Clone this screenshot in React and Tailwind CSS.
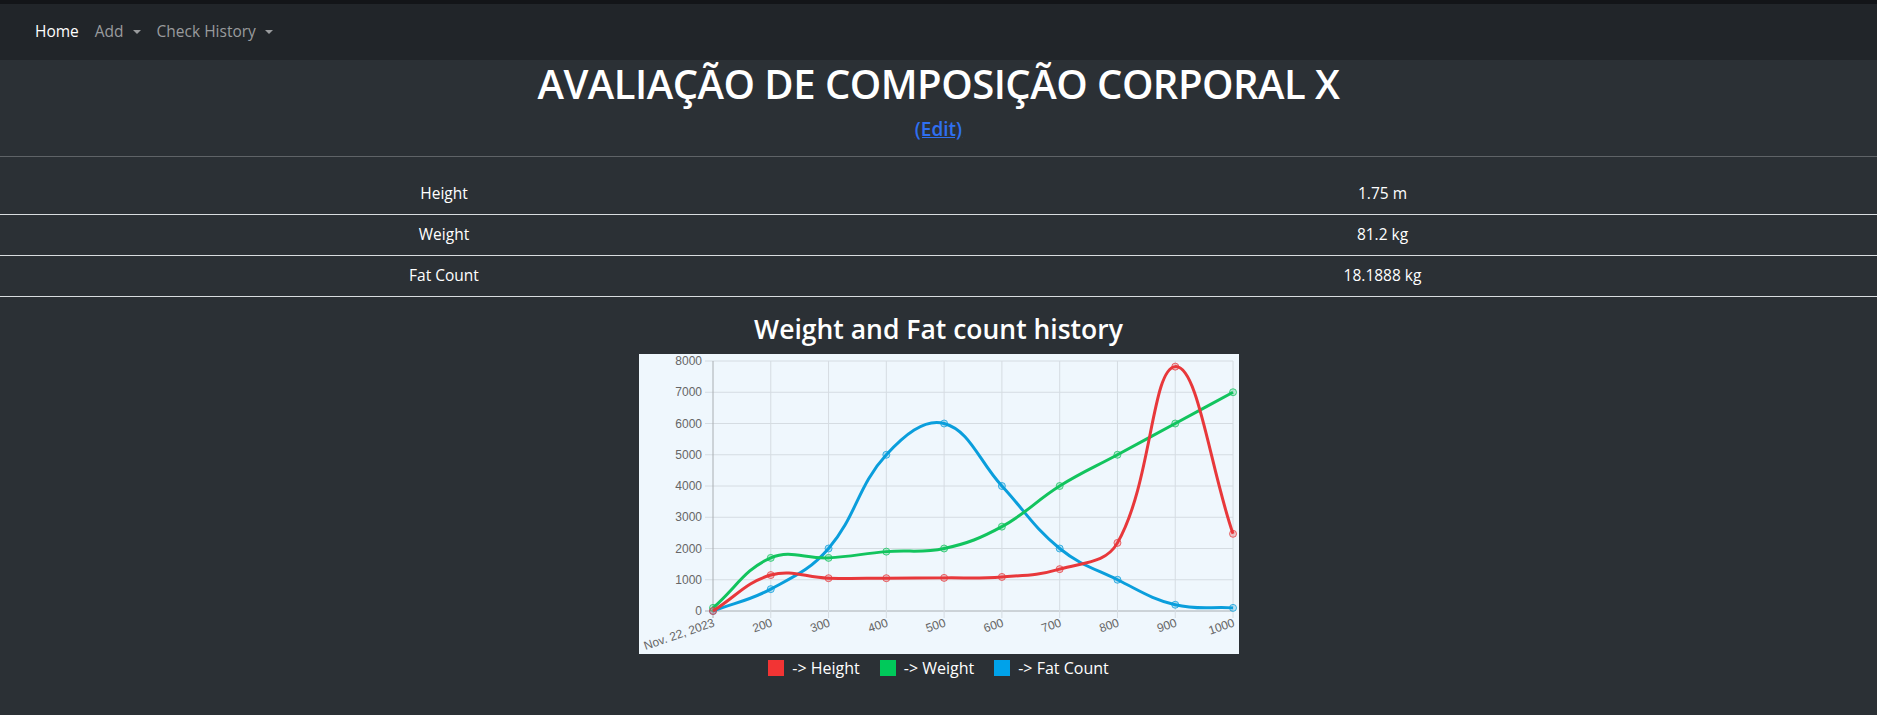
import React from 'react'

const labels = ['Nov. 22, 2023', '200', '300', '400', '500', '600', '700', '800', '900', '1000']

const datasets = [
  { name: 'Fat Count', color: '#0a9edc', swatch: '#00a2ea', values: [0, 700, 2000, 5000, 6000, 4000, 2000, 1000, 200, 100] },
  { name: 'Weight', color: '#12c45e', swatch: '#00c95a', values: [100, 1700, 1700, 1900, 2000, 2700, 4000, 5000, 6000, 7000] },
  { name: 'Height', color: '#e8383b', swatch: '#f23434', values: [0, 1150, 1050, 1050, 1060, 1090, 1340, 2180, 7820, 2470] },
]

const chart = { left: 74, top: 7, bottom: 257, right: 594, step: 57.78 }

function toPoint(value, index) {
  return {
    x: chart.left + index * chart.step,
    y: chart.bottom - (value * (chart.bottom - chart.top)) / 8000,
  }
}

const clampY = (y) => Math.min(chart.bottom, Math.max(chart.top, y))

// same spline as chart.js (tension 0.4)
function buildPath(values) {
  const pts = values.map(toPoint)
  const controls = pts.map((cur, i) => {
    const prev = pts[i - 1] || cur
    const next = pts[i + 1] || cur
    const d01 = Math.hypot(cur.x - prev.x, cur.y - prev.y)
    const d12 = Math.hypot(next.x - cur.x, next.y - cur.y)
    let s01 = d01 / (d01 + d12)
    let s12 = d12 / (d01 + d12)
    if (isNaN(s01)) s01 = 0
    if (isNaN(s12)) s12 = 0
    const fa = 0.4 * s01
    const fb = 0.4 * s12
    return {
      prev: { x: cur.x - fa * (next.x - prev.x), y: clampY(cur.y - fa * (next.y - prev.y)) },
      next: { x: cur.x + fb * (next.x - prev.x), y: clampY(cur.y + fb * (next.y - prev.y)) },
    }
  })
  let d = `M${pts[0].x},${pts[0].y}`
  for (let i = 1; i < pts.length; i++) {
    const a = controls[i - 1].next
    const b = controls[i].prev
    d += ` C${a.x},${a.y} ${b.x},${b.y} ${pts[i].x},${pts[i].y}`
  }
  return { d, pts }
}

function HistoryChart() {
  const yTicks = [0, 1000, 2000, 3000, 4000, 5000, 6000, 7000, 8000]
  return (
    <svg width="600" height="300" viewBox="0 0 600 300" className="block">
      <rect width="600" height="300" fill="#eff7fd" />
      {yTicks.map((tick) => {
        const y = chart.bottom - (tick * (chart.bottom - chart.top)) / 8000
        return (
          <g key={tick}>
            <line x1={66} x2={chart.right} y1={y} y2={y} stroke={tick === 0 ? '#a9aeb2' : '#d5dce2'} strokeWidth="1" />
            <text x={63} y={y + 4} textAnchor="end" fontSize="12" fill="#666" fontFamily="'Liberation Sans', Arial, sans-serif">
              {tick}
            </text>
          </g>
        )
      })}
      {labels.map((label, i) => {
        const x = chart.left + i * chart.step
        return (
          <g key={label}>
            <line x1={x} x2={x} y1={chart.top} y2={chart.bottom + 7} stroke={i === 0 ? '#a9aeb2' : '#d5dce2'} strokeWidth="1" />
            <text
              transform={`translate(${x + 1},${chart.bottom + 11}) rotate(-19)`}
              textAnchor="end"
              dy="0.35em"
              fontSize="12"
              fill="#666"
              fontFamily="'Liberation Sans', Arial, sans-serif"
            >
              {label}
            </text>
          </g>
        )
      })}
      {datasets.map((set) => {
        const { d, pts } = buildPath(set.values)
        return (
          <g key={set.name}>
            <path d={d} fill="none" stroke={set.color} strokeWidth="3" />
            {pts.map((p, i) => (
              <circle key={i} cx={p.x} cy={p.y} r="3.5" fill={set.color} fillOpacity="0.25" stroke={set.color} strokeOpacity="0.75" strokeWidth="1" />
            ))}
          </g>
        )
      })}
    </svg>
  )
}

const rows = [
  ['Height', '1.75 m'],
  ['Weight', '81.2 kg'],
  ['Fat Count', '18.1888 kg'],
]

function Caret() {
  return <span className="ml-[9px] inline-block h-0 w-0 border-x-[4px] border-t-[4.5px] border-x-transparent border-t-current align-middle" />
}

export default function App() {
  const legend = [...datasets].reverse()
  return (
    <div className="min-h-[715px] bg-[#2b3035] font-['Open_Sans','Noto_Sans',sans-serif] text-white">
      <div className="h-[4px] bg-[#131518]" />
      <nav className="flex h-[56px] items-center bg-[#212529] pl-[27px] text-[15.5px]">
        <a className="px-2 text-white">Home</a>
        <a className="flex items-center px-2 text-[#999b9d]">
          Add
          <Caret />
        </a>
        <a className="flex items-center px-2 text-[#999b9d]">
          Check History
          <Caret />
        </a>
      </nav>

      <h1 className="text-center text-[40px] font-semibold leading-[48px] tracking-[-0.5px]">
        AVALIAÇÃO DE COMPOSIÇÃO CORPORAL X
      </h1>
      <div className="mt-[9px] text-center text-[19px] leading-[24px] font-semibold">
        <a className="text-[#2f6ff0] underline">(Edit)</a>
      </div>
      <hr className="mt-[15px] border-0 border-t border-[#5f6367]" />

      <table className="mt-[16px] w-full border-collapse text-[15.5px]">
        <tbody>
          {rows.map(([label, value]) => (
            <tr key={label} className="border-b border-[#d9dcdf]">
              <td className="h-[41px] w-[888px] text-center">{label}</td>
              <td className="h-[41px] text-center">{value}</td>
            </tr>
          ))}
        </tbody>
      </table>

      <div className="mt-[15px] flex flex-col items-center">
        <h2 className="text-[26.5px] font-semibold leading-[34px]">Weight and Fat count history</h2>
        <div className="mt-[8px]">
          <HistoryChart />
        </div>
        <div className="mt-[2px] flex items-center gap-[20px] text-[16px] leading-[24px]">
          {legend.map((set) => (
            <div key={set.name} className="flex items-center gap-[8px]">
              <span className="inline-block h-[16px] w-[16px]" style={{ backgroundColor: set.swatch }} />
              <span>-&gt; {set.name}</span>
            </div>
          ))}
        </div>
      </div>
    </div>
  )
}
